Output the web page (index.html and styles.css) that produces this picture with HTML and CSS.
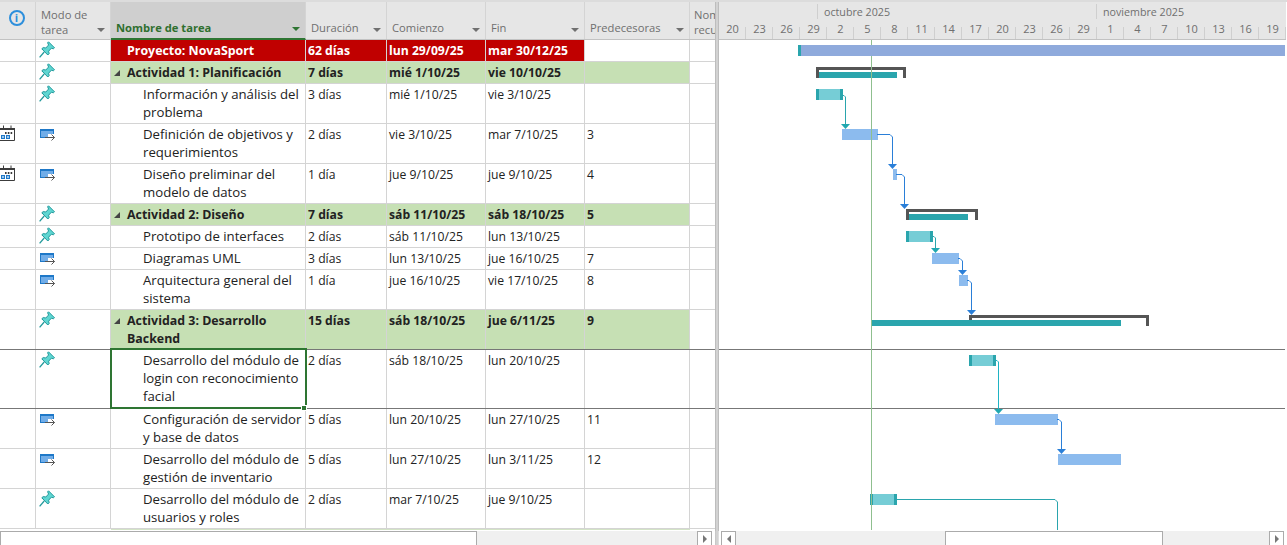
FILE: index.html
```html
<!DOCTYPE html>
<html lang="es">
<head>
  <meta charset="UTF-8">
  <title>Proyecto NovaSport</title>
  <link rel="stylesheet" href="styles.css">
</head>
<body>

  <svg class="defs" width="0" height="0">
    <symbol id="pin" viewBox="0 0 16 17">
      <path d="M9.5 0.8 L15.5 6.8 L14.3 7.8 L12.4 7.2 L9.6 10.2 L10.2 12.6 L8.8 14 L2.8 7.8 L4.2 6.6 L6.8 7 L9.6 4 L8.6 1.8 Z" fill="#5fd6d2" stroke="#22999b" stroke-width="1"/>
      <path d="M5.2 11 L0.6 16.4" fill="none" stroke="#22999b" stroke-width="1.3"/>
    </symbol>
    <symbol id="auto" viewBox="0 0 15 12">
      <rect x="0.5" y="0.5" width="13" height="8" fill="#71ade8" stroke="#1e78c8"/>
      <rect x="0" y="0" width="14" height="2" fill="#1e78c8"/>
      <rect x="8" y="5" width="7" height="5" fill="#fff"/>
      <path d="M5 8.5 H14.5 M11.5 5.5 L14.5 8.5 L11.5 11.5" fill="none" stroke="#555" stroke-width="1"/>
    </symbol>
    <symbol id="cal" viewBox="0 0 15 16">
      <path d="M0 3.5 H14.5 V15.5 H0 M3.5 0.5 V3 M11 0.5 V3" fill="none" stroke="#3c3c3c" stroke-width="1"/>
      <rect x="0" y="3" width="15" height="2" fill="#3c3c3c"/>
      <rect x="5" y="7" width="1.6" height="2" fill="#3c3c3c"/>
      <rect x="7.8" y="7" width="1.6" height="2" fill="#3c3c3c"/>
      <rect x="10.6" y="7" width="1.6" height="2" fill="#3c3c3c"/>
      <rect x="1.5" y="10.5" width="3" height="3" fill="#9cc8ee" stroke="#1e78c8"/>
      <rect x="6.5" y="10.5" width="3" height="3" fill="#9cc8ee" stroke="#1e78c8"/>
    </symbol>
    <symbol id="caret" viewBox="0 0 8 4"><path d="M0 0 H8 L4 4 Z"/></symbol>
  </svg>

  <div class="top-strip"></div>

  <div class="main">
    <div class="sheet">
      <div class="row head">
        <div class="hd hd-info"><span class="info">i</span></div>
        <div class="hd hd-mode"><span>Modo de<br>tarea</span><svg class="caret"><use href="#caret"/></svg></div>
        <div class="hd hd-name"><span>Nombre de tarea</span><svg class="caret"><use href="#caret"/></svg></div>
        <div class="hd"><span>Duración</span><svg class="caret"><use href="#caret"/></svg></div>
        <div class="hd"><span>Comienzo</span><svg class="caret"><use href="#caret"/></svg></div>
        <div class="hd"><span>Fin</span><svg class="caret"><use href="#caret"/></svg></div>
        <div class="hd"><span>Predecesoras</span><svg class="caret"><use href="#caret"/></svg></div>
        <div class="hd hd-res"><span class="res-label">Nombres de<br>recursos</span></div>
      </div>

      <div class="row h22 project">
        <div class="c"></div>
        <div class="c mode"><svg class="ico-pin"><use href="#pin"/></svg></div>
        <div class="c name lvl0">Proyecto: NovaSport</div>
        <div class="c">62 días</div><div class="c">lun 29/09/25</div><div class="c">mar 30/12/25</div>
        <div class="c pred"></div><div class="c res"></div>
      </div>

      <div class="row h22 summary">
        <div class="c"></div>
        <div class="c mode"><svg class="ico-pin"><use href="#pin"/></svg></div>
        <div class="c name lvl0"><i class="tri"></i>Actividad 1: Planificación</div>
        <div class="c">7 días</div><div class="c">mié 1/10/25</div><div class="c">vie 10/10/25</div>
        <div class="c"></div><div class="c res"></div>
      </div>

      <div class="row h40">
        <div class="c"></div>
        <div class="c mode"><svg class="ico-pin"><use href="#pin"/></svg></div>
        <div class="c name lvl1">Información y análisis del problema</div>
        <div class="c">3 días</div><div class="c">mié 1/10/25</div><div class="c">vie 3/10/25</div>
        <div class="c"></div><div class="c res"></div>
      </div>

      <div class="row h40">
        <div class="c ind"><svg class="ico-cal"><use href="#cal"/></svg></div>
        <div class="c mode"><svg class="ico-auto"><use href="#auto"/></svg></div>
        <div class="c name lvl1">Definición de objetivos y requerimientos</div>
        <div class="c">2 días</div><div class="c">vie 3/10/25</div><div class="c">mar 7/10/25</div>
        <div class="c">3</div><div class="c res"></div>
      </div>

      <div class="row h40">
        <div class="c ind"><svg class="ico-cal"><use href="#cal"/></svg></div>
        <div class="c mode"><svg class="ico-auto"><use href="#auto"/></svg></div>
        <div class="c name lvl1">Diseño preliminar del modelo de datos</div>
        <div class="c">1 día</div><div class="c">jue 9/10/25</div><div class="c">jue 9/10/25</div>
        <div class="c">4</div><div class="c res"></div>
      </div>

      <div class="row h22 summary">
        <div class="c"></div>
        <div class="c mode"><svg class="ico-pin"><use href="#pin"/></svg></div>
        <div class="c name lvl0"><i class="tri"></i>Actividad 2: Diseño</div>
        <div class="c">7 días</div><div class="c">sáb 11/10/25</div><div class="c">sáb 18/10/25</div>
        <div class="c">5</div><div class="c res"></div>
      </div>

      <div class="row h22">
        <div class="c"></div>
        <div class="c mode"><svg class="ico-pin"><use href="#pin"/></svg></div>
        <div class="c name lvl1">Prototipo de interfaces</div>
        <div class="c">2 días</div><div class="c">sáb 11/10/25</div><div class="c">lun 13/10/25</div>
        <div class="c"></div><div class="c res"></div>
      </div>

      <div class="row h22">
        <div class="c"></div>
        <div class="c mode"><svg class="ico-auto"><use href="#auto"/></svg></div>
        <div class="c name lvl1">Diagramas UML</div>
        <div class="c">3 días</div><div class="c">lun 13/10/25</div><div class="c">jue 16/10/25</div>
        <div class="c">7</div><div class="c res"></div>
      </div>

      <div class="row h40">
        <div class="c"></div>
        <div class="c mode"><svg class="ico-auto"><use href="#auto"/></svg></div>
        <div class="c name lvl1">Arquitectura general del sistema</div>
        <div class="c">1 día</div><div class="c">jue 16/10/25</div><div class="c">vie 17/10/25</div>
        <div class="c">8</div><div class="c res"></div>
      </div>

      <div class="row h40 summary break">
        <div class="c"></div>
        <div class="c mode"><svg class="ico-pin"><use href="#pin"/></svg></div>
        <div class="c name lvl0"><i class="tri"></i>Actividad 3: Desarrollo Backend</div>
        <div class="c">15 días</div><div class="c">sáb 18/10/25</div><div class="c">jue 6/11/25</div>
        <div class="c">9</div><div class="c res"></div>
      </div>

      <div class="row h59 break">
        <div class="c"></div>
        <div class="c mode"><svg class="ico-pin"><use href="#pin"/></svg></div>
        <div class="c name lvl1 selected">Desarrollo del módulo de login con reconocimiento facial<i class="handle"></i></div>
        <div class="c">2 días</div><div class="c">sáb 18/10/25</div><div class="c">lun 20/10/25</div>
        <div class="c"></div><div class="c res"></div>
      </div>

      <div class="row h40">
        <div class="c"></div>
        <div class="c mode"><svg class="ico-auto"><use href="#auto"/></svg></div>
        <div class="c name lvl1">Configuración de servidor y base de datos</div>
        <div class="c">5 días</div><div class="c">lun 20/10/25</div><div class="c">lun 27/10/25</div>
        <div class="c">11</div><div class="c res"></div>
      </div>

      <div class="row h40">
        <div class="c"></div>
        <div class="c mode"><svg class="ico-auto"><use href="#auto"/></svg></div>
        <div class="c name lvl1">Desarrollo del módulo de gestión de inventario</div>
        <div class="c">5 días</div><div class="c">lun 27/10/25</div><div class="c">lun 3/11/25</div>
        <div class="c">12</div><div class="c res"></div>
      </div>

      <div class="row h40">
        <div class="c"></div>
        <div class="c mode"><svg class="ico-pin"><use href="#pin"/></svg></div>
        <div class="c name lvl1">Desarrollo del módulo de usuarios y roles</div>
        <div class="c">2 días</div><div class="c">mar 7/10/25</div><div class="c">jue 9/10/25</div>
        <div class="c"></div><div class="c res"></div>
      </div>

      <div class="sheet-end"></div>
    </div>

    <div class="splitter"></div>

    <div class="gantt">
      <div class="tl-head">
        <div class="tl-months">
          <span class="month m-oct">octubre 2025</span>
          <span class="month m-nov">noviembre 2025</span>
        </div>
        <div class="tl-days">
          <span>20</span><span>23</span><span>26</span><span>29</span><span>2</span><span>5</span><span>8</span><span>11</span><span>14</span><span>17</span><span>20</span><span>23</span><span>26</span><span>29</span><span>1</span><span>4</span><span>7</span><span>10</span><span>13</span><span>16</span><span>19</span>
        </div>
      </div>
      <svg class="chart" viewBox="719 40 568 491" width="568" height="491">
        <g class="breaks">
          <rect x="719" y="349" width="566" height="1"/>
          <rect x="719" y="408" width="566" height="1"/>
        </g>
        <rect class="today" x="871" y="40" width="1" height="5"/>

        <!-- proyecto -->
        <rect x="798" y="45" width="3" height="11" fill="#2aa5ad"/>
        <rect x="801" y="45" width="484" height="11" fill="#8faadc"/>

        <!-- actividad 1 -->
        <rect class="sum" x="816" y="67" width="90" height="3"/>
        <rect class="sum" x="816" y="67" width="3" height="11"/>
        <rect class="sum" x="903" y="67" width="3" height="11"/>
        <rect class="teal" x="819" y="72" width="78" height="6"/>

        <rect class="teal" x="816" y="89" width="27" height="11"/>
        <rect class="pale" x="819" y="89" width="21" height="11"/>
        <path class="ln-t" d="M843 95.5 H844 L845.5 97 V124"/>
        <path class="ar-t" d="M841 124 H850 L845.5 129 Z"/>

        <rect class="auto" x="842" y="129" width="36" height="11"/>
        <path class="ln-b" d="M877 134.5 H890 L892.5 137 V165"/>
        <path class="ar-b" d="M888 164 H897 L892.5 169 Z"/>

        <rect class="auto" x="893" y="169" width="4" height="11"/>
        <path class="ln-b" d="M896 174.5 H902 L904.5 177 V205"/>
        <path class="ar-b" d="M900 204 H909 L904.5 209 Z"/>

        <!-- actividad 2 -->
        <rect class="sum" x="906" y="209" width="72" height="3"/>
        <rect class="sum" x="906" y="209" width="3" height="11"/>
        <rect class="sum" x="975" y="209" width="3" height="11"/>
        <rect class="teal" x="909" y="214" width="59" height="6"/>

        <rect class="teal" x="906" y="231" width="27" height="11"/>
        <rect class="pale" x="909" y="231" width="21" height="11"/>
        <path class="ln-t" d="M933 236.5 H934 L935.5 238 V249"/>
        <path class="ar-t" d="M931 248 H940 L935.5 253 Z"/>

        <rect class="auto" x="932" y="253" width="27" height="11"/>
        <path class="ln-b" d="M958 258.5 H960 L962.5 261 V271"/>
        <path class="ar-b" d="M958 270 H967 L962.5 275 Z"/>

        <rect class="auto" x="959" y="275" width="9" height="11"/>
        <path class="ln-b" d="M967 280.5 H969 L971.5 283 V311"/>
        <path class="ar-b" d="M967 310 H976 L971.5 315 Z"/>

        <!-- actividad 3 -->
        <rect class="sum" x="969" y="315" width="180" height="3"/>
        <rect class="sum" x="969" y="315" width="3" height="11"/>
        <rect class="sum" x="1146" y="315" width="3" height="11"/>
        <rect class="teal" x="872" y="320" width="249" height="6"/>

        <rect class="teal" x="969" y="355" width="27" height="11"/>
        <rect class="pale" x="972" y="355" width="21" height="11"/>
        <path class="ln-c" d="M996 360.5 H997 L998.5 362 V410"/>
        <path class="ar-t" d="M994 409 H1003 L998.5 414 Z"/>

        <rect class="auto" x="995" y="414" width="63" height="11"/>
        <path class="ln-b" d="M1057 419.5 H1059 L1061.5 422 V450"/>
        <path class="ar-b" d="M1057 449 H1066 L1061.5 454 Z"/>

        <rect class="auto" x="1058" y="454" width="63" height="11"/>

        <rect class="teal" x="870" y="494" width="27" height="11"/>
        <rect class="pale" x="873" y="494" width="21" height="11"/>
        <path class="ln-t" d="M897 499.5 H1055 L1057.5 502 V530"/>

        <rect class="today" x="871" y="56" width="1" height="474"/>
      </svg>
    </div>
  </div>

  <div class="scrollbars">
    <div class="sb sb-left">
      <div class="sb-thumb t-left"></div>
      <div class="sb-track"></div>
      <div class="sb-btn"><i class="arr-r"></i></div>
    </div>
    <div class="sb-gap"></div>
    <div class="sb sb-right">
      <div class="sb-btn"><i class="arr-l"></i></div>
      <div class="sb-track t-a"></div>
      <div class="sb-thumb t-right"></div>
      <div class="sb-track"></div>
      <div class="sb-btn"><i class="arr-r"></i></div>
    </div>
  </div>

</body>
</html>
```

FILE: styles.css
```css
* { box-sizing: border-box; }
html, body { margin: 0; padding: 0; }
body { width: 1287px; height: 545px; overflow: hidden; background: white; font-family: "Open Sans", "Noto Sans", sans-serif; font-size: 12.2px; color: #222; }
.defs { position: absolute; }
.top-strip { height: 2px; background: #dcdcdc; }
.main { display: flex; height: 529px; }
.sheet { width: 715px; flex: none; overflow: hidden; }
.splitter { width: 4px; flex: none; background: #d2d2d2; border-left: 1px solid #bdbdbd; border-right: 1px solid #bdbdbd; }
.gantt { flex: 1; min-width: 0; }

/* tabla */
.row { display: grid; grid-template-columns: 36px 75px 195px 81px 99px 99px 105px 25px; border-bottom: 1px solid #d4d4d4; }
.h22 { height: 22px; }
.h40 { height: 40px; }
.h59 { height: 59px; }
.head { height: 38px; background: #e6e6e6; border-bottom: 1px solid #c2c2c2; font-size: 11.2px; }
.hd { position: relative; border-right: 1px solid #d4d4d4; color: #6f6f6f; display: flex; align-items: flex-end; padding: 0 3px 3px 5px; line-height: 17px; white-space: nowrap; overflow: hidden; }
.hd-info { justify-content: center; align-items: flex-start; padding: 8px 2px 0 0; }
.hd-mode { padding-bottom: 2px; line-height: 15px; }
.hd-name { background: #cfcfcf; color: #2f6f2f; font-weight: 700; border-bottom: 2px solid #2e7532; margin-bottom: -1px; padding-left: 5px; padding-bottom: 2px; }
.hd-res { padding: 0 0 2px 4px; border-right: 0; line-height: 15px; }
.res-label { display: block; width: 21px; overflow: hidden; }
.caret { position: absolute; right: 5px; bottom: 7px; width: 8px; height: 4px; fill: #707070; }
.hd-name .caret { fill: #2e7532; }
.info { width: 16px; height: 16px; border-radius: 50%; border: 2px solid #2d8fdc; color: #2d8fdc; font-size: 11px; font-weight: 700; line-height: 12px; text-align: center; }

.c { border-right: 1px solid #d4d4d4; padding: 2px 2px 0; line-height: 18px; overflow: hidden; }
.res { border-right: 0; }
.mode { padding: 0 0 0 3px; }
.ind { overflow: visible; padding: 0; }
.ico-pin { display: block; width: 16px; height: 17px; margin-top: 1px; }
.ico-auto { display: block; width: 15px; height: 12px; margin: 5px 0 0 1px; }
.ico-cal { display: block; width: 15px; height: 16px; margin-top: 1px; }
.name { position: relative; padding-right: 0; }
.lvl0 { padding-left: 16px; font-size: 12.4px; }
.lvl1 { padding-left: 32px; padding-top: 1px; font-size: 13.2px; }
.tri { display: inline-block; width: 0; height: 0; border-left: 6px solid transparent; border-bottom: 6px solid #444; margin: 0 7px 1px -13px; }

.project .c { font-weight: 700; color: white; background: #c00000; }
.project .c:nth-child(1), .project .c:nth-child(2), .project .pred, .project .res { background: white; }
.summary .c { font-weight: 700; background: #c6e0b4; }
.summary .c:nth-child(1), .summary .c:nth-child(2), .summary .res { background: white; }
.break { border-bottom-color: #777; }

.selected { outline: 2px solid #2e7532; outline-offset: -1px; margin-top: -1px; padding-top: 2px; overflow: visible; z-index: 1; }
.handle { position: absolute; right: -2px; bottom: -3px; width: 6px; height: 6px; background: #2e7532; border: 1px solid white; }

.sheet-end { height: 1px; width: 579px; margin-left: 111px; background: #d3e3c6; }

/* linea de tiempo */
.tl-head { height: 38px; margin-right: 1px; background: #e6e6e6; border-bottom: 1px solid #c2c2c2; color: #6f6f6f; }
.tl-months { height: 18px; position: relative; }
.month { position: absolute; top: 2px; height: 15px; font-size: 10.7px; line-height: 17px; padding-left: 6px; border-left: 1px solid #cfcfcf; }
.m-oct { left: 98px; }
.m-nov { left: 377px; }
.tl-days { display: flex; height: 19px; font-size: 11px; line-height: 17px; }
.tl-days span { flex: none; width: 27px; text-align: center; background: linear-gradient(#cfcfcf, #cfcfcf) right bottom / 1px 12px no-repeat; }
.chart { display: block; }
.breaks rect { fill: #777; }
.today { fill: #8fbf8f; }
.sum { fill: #555; }
.teal { fill: #2aa5ad; }
.pale { fill: #76cdd6; }
.auto { fill: #8cbbee; }
.ln-t { fill: none; stroke: #2aa5ad; }
.ln-c { fill: none; stroke: #1fb3c4; }
.ar-t { fill: #20a8b0; }
.ln-b { fill: none; stroke: #2a7fd8; }
.ar-b { fill: #2a7fd8; }

/* barras de desplazamiento */
.scrollbars { display: flex; height: 14px; }
.sb { display: flex; background: #f0f0f0; }
.sb-left { width: 712px; }
.sb-gap { width: 9px; background: linear-gradient(to right, white 3px, #bdbdbd 3px, #d2d2d2 4px, #d2d2d2 6px, #bdbdbd 6px, white 7px); }
.sb-right { width: 563px; }
.sb-track { flex: 1; background: #f0f0f0; }
.t-left { width: 477px; border-left: 0; }
.t-a { flex: none; width: 209px; }
.t-right { width: 218px; }
.sb-thumb { background: white; border: 1px solid #ababab; border-bottom: 0; }
.sb-btn { width: 15px; flex: none; background: white; border: 1px solid #ababab; border-bottom: 0; display: flex; align-items: center; justify-content: center; }
.arr-r { border-left: 4px solid #777; border-top: 4px solid transparent; border-bottom: 4px solid transparent; }
.arr-l { border-right: 4px solid #777; border-top: 4px solid transparent; border-bottom: 4px solid transparent; }
```
